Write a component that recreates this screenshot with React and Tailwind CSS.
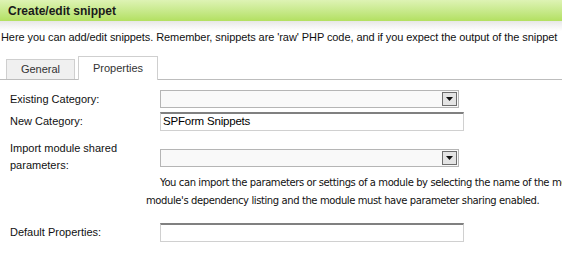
import React from 'react';

function SelectBox() {
  return (
    <div className="flex h-[18px] w-[299px] items-center justify-end border border-[#b5b5b5] bg-[#f9f9f9] pr-[1px]">
      {/* dropdown button */}
      <div className="flex h-[14px] w-[15px] items-center justify-center border border-[#6d6d6d] bg-[#e4e4e4]">
        <svg width="7" height="4" viewBox="0 0 7 4">
          <path d="M0 0h7L3.5 4z" fill="#111" />
        </svg>
      </div>
    </div>
  );
}

function TextBox({ value }) {
  return (
    <div className="flex h-[19px] w-[304px] items-center border border-[#d0d0d0] border-t-2 border-t-[#808080] px-[2px] text-[11.5px] leading-none tracking-[-0.2px] text-black">
      {value}
    </div>
  );
}

export default function App() {
  return (
    <div className="h-[258px] w-[562px] overflow-hidden bg-white font-['Liberation_Sans',Arial,sans-serif] text-[11px] text-[#111]">
      {/* Header bar */}
      <div className="flex h-[21px] items-center bg-gradient-to-b from-[#def3b4] to-[#b3e060] pl-[8px] text-[12px] font-bold text-[#1a1a1a]">
        Create/edit snippet
      </div>
      <div className="h-[10px] bg-gradient-to-b from-[#e7e7e7] to-white" />

      {/* Intro */}
      <div className="h-[13px] whitespace-nowrap pl-[1px] text-[11px] leading-[13px] tracking-[-0.08px]">
        Here you can add/edit snippets. Remember, snippets are 'raw' PHP code, and if you expect the output of the snippet
      </div>

      {/* Tabs */}
      <div className="mt-[12px] flex items-end gap-[3px] border-b border-[#bdbdbd] pl-[6px]">
        <div className="flex h-[20px] w-[69px] items-center justify-center border border-b-0 border-[#cfcfcf] bg-[#f0f0f0] text-[#333]">
          General
        </div>
        <div className="-mb-px flex h-[24px] w-[80px] items-center justify-center border border-b-0 border-[#cfcfcf] bg-white text-[#333]">
          Properties
        </div>
      </div>

      {/* Form */}
      <div className="pl-[10px] pt-[10px]">
        <div className="flex h-[18px] items-center">
          <div className="w-[150px]">Existing Category:</div>
          <SelectBox />
        </div>
        <div className="mt-[4px] flex h-[19px] items-center">
          <div className="w-[150px]">New Category:</div>
          <TextBox value="SPForm Snippets" />
        </div>
        <div className="mt-[9px] flex items-start">
          <div className="w-[150px] leading-[17px]">
            Import module shared
            <br />
            parameters:
          </div>
          <div className="mt-[9px]">
            <SelectBox />
          </div>
        </div>
        <div className="whitespace-nowrap pl-[136px] font-['DejaVu_Sans',Verdana,sans-serif] text-[10px] leading-[18px] tracking-[-0.4px] text-[#111]">
          <div className="pl-[14px]">
            You can import the parameters or settings of a module by selecting the name of the module from the
          </div>
          <div>module's dependency listing and the module must have parameter sharing enabled.</div>
        </div>
        <div className="mt-[13px] flex h-[19px] items-center">
          <div className="w-[150px]">Default Properties:</div>
          <TextBox value="" />
        </div>
      </div>
    </div>
  );
}
